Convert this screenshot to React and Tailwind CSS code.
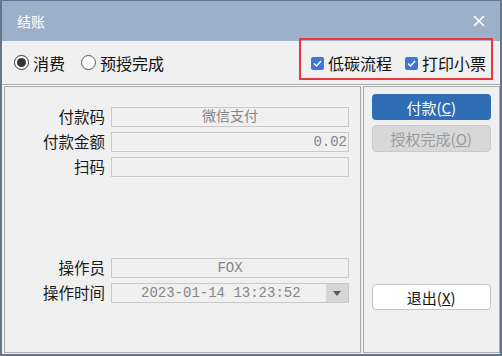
import React from "react";

const cjk = { fontFamily: '"Noto Sans CJK SC", "Microsoft YaHei", sans-serif' };
const mono = { fontFamily: '"Liberation Mono", "Noto Sans CJK SC", monospace' };

function Field({ label, children, align = "center", dropdown = false }) {
  return (
    <div className="flex items-center h-[20px]">
      <div className="w-[100px] text-right text-[15.5px] leading-none text-[#1a1a1a]" style={cjk}>
        {label}
      </div>
      <div className="ml-[6px] w-[238px] h-[20px] border border-[#c9c9c9] bg-[#f0f0f0] flex items-center">
        <div
          className={
            "flex-1 text-[14px] leading-none text-[#858585] px-[1px] " +
            (align === "right" ? "text-right" : align === "left" ? "text-left" : "text-center")
          }
          style={mono}
        >
          {children}
        </div>
        {dropdown && (
          <div className="w-[22px] h-full bg-[#d6d6d6] flex items-center justify-center">
            <svg width="8" height="5" viewBox="0 0 8 5">
              <path d="M0 0 L8 0 L4 5 Z" fill="#5a5a5a" />
            </svg>
          </div>
        )}
      </div>
    </div>
  );
}

function Radio({ checked, label }) {
  return (
    <div className="flex items-center gap-[4px]">
      <div
        className={
          "w-[15px] h-[15px] rounded-full border flex items-center justify-center bg-white " +
          (checked ? "border-[#333]" : "border-[#555]")
        }
      >
        {checked && <div className="w-[9px] h-[9px] rounded-full bg-[#333]" />}
      </div>
      <span className="text-[16px] leading-none text-[#111]" style={cjk}>
        {label}
      </span>
    </div>
  );
}

function Check({ label }) {
  return (
    <div className="flex items-center gap-[4px]">
      <div className="w-[13px] h-[13px] rounded-[2px] bg-[#3d78d6] flex items-center justify-center">
        <svg width="9" height="7" viewBox="0 0 9 7">
          <path d="M1 3.5 L3.5 6 L8 1" stroke="white" strokeWidth="1.4" fill="none" />
        </svg>
      </div>
      <span className="text-[16px] leading-none text-[#111]" style={cjk}>
        {label}
      </span>
    </div>
  );
}

export default function App() {
  return (
    <div className="w-[502px] h-[356px] bg-[#f0f0f0] border-x-2 border-b-2 border-t border-[#66768a] relative flex flex-col overflow-hidden">
      {/* title bar */}
      <div className="h-[40px] bg-[#9cb1c9] flex items-center justify-between pl-[15px] pr-[15px] shrink-0">
        <span className="text-[14px] text-white" style={cjk}>
          结账
        </span>
        <svg width="12" height="12" viewBox="0 0 12 12">
          <path d="M1 1 L11 11 M11 1 L1 11" stroke="white" strokeWidth="1.6" />
        </svg>
      </div>
      {/* top row */}
      <div className="h-[43px] flex items-center justify-between pl-[12px] pr-[14px] shrink-0">
        <div className="flex items-center gap-[16px]">
          <Radio checked label="消费" />
          <Radio label="预授完成" />
        </div>
        <div className="flex items-center gap-[13px] pt-[1px]">
          <Check label="低碳流程" />
          <Check label="打印小票" />
        </div>
      </div>
      <div className="h-[2px] border-t border-[#a8a8a8] bg-white shrink-0" />
      {/* panels */}
      <div className="flex-1 flex pl-[2px] pb-[1px]">
        <div className="w-[358px] border border-[#a9a9a9] pt-[20px] flex flex-col">
          <div className="flex flex-col gap-[5px]">
            <Field label="付款码">微信支付</Field>
            <Field label="付款金额" align="right">0.02</Field>
            <Field label="扫码"> </Field>
          </div>
          <div className="flex flex-col gap-[5px] mt-[81px]">
            <Field label="操作员">FOX</Field>
            <Field label="操作时间" align="left" dropdown>
              <span className="pl-[28px]">2023-01-14 13:23:52</span>
            </Field>
          </div>
        </div>
        <div className="w-[138px] ml-[2px] border border-[#a9a9a9] pt-[7px] px-[8px] flex flex-col">
          <button
            className="h-[26px] rounded-[4px] bg-[#2f6db5] text-white text-[15px] leading-none flex items-center justify-center"
            style={cjk}
          >
            付款(<span className="underline">C</span>)
          </button>
          <button
            className="mt-[5px] h-[27px] rounded-[4px] bg-[#d8d8d8] border border-[#cacaca] text-[#9a9a9a] text-[15px] leading-none flex items-center justify-center"
            style={cjk}
          >
            授权完成(<span className="underline">O</span>)
          </button>
          <button
            className="mt-[132px] h-[26px] rounded-[4px] bg-white border border-[#c4c4c4] text-[#111] text-[15px] leading-none flex items-center justify-center"
            style={cjk}
          >
            退出(<span className="underline">X</span>)
          </button>
        </div>
      </div>
      {/* annotation box */}
      <div className="absolute left-[297px] top-[37px] w-[194px] h-[42px] border-2 border-[#e8383b]" />
    </div>
  );
}
